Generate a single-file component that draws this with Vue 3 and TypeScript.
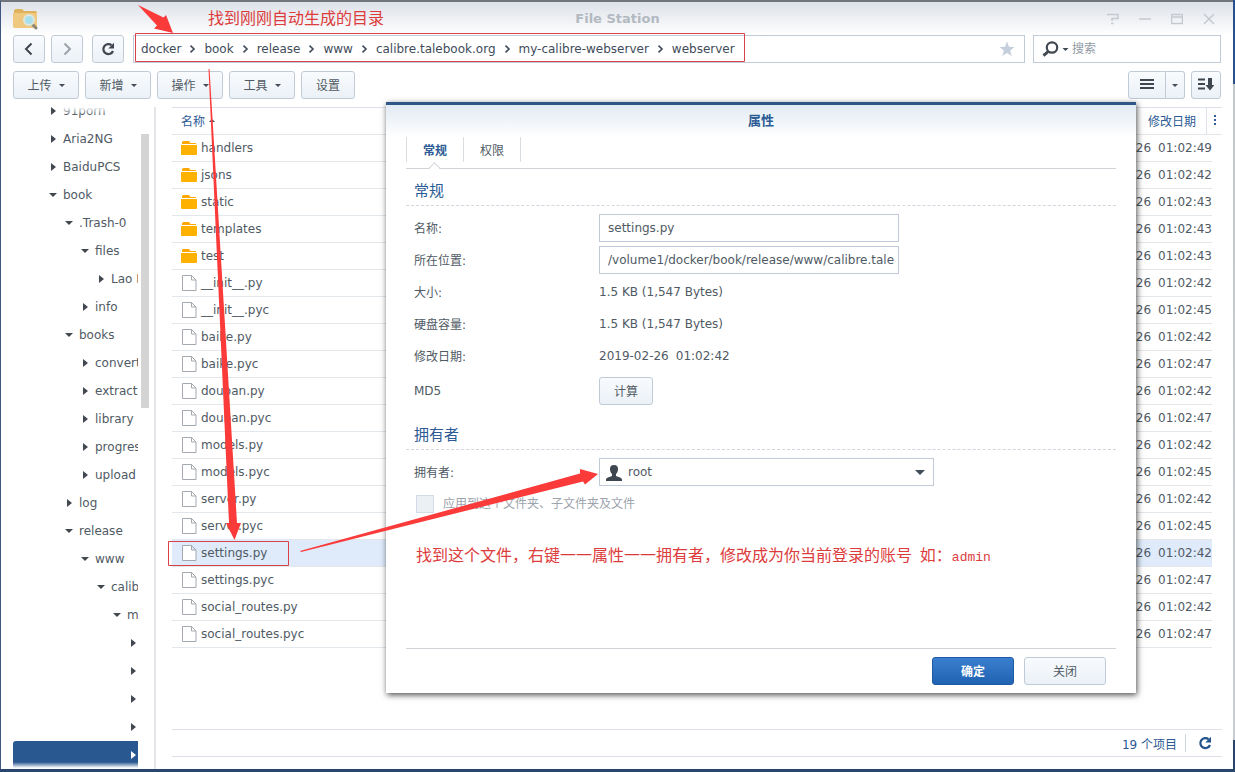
<script setup lang="ts">
import { ref } from 'vue'

interface TreeNode {
  name: string
  level: number
  open?: boolean
  selected?: boolean
}
interface FileRow {
  name: string
  time: string
  folder?: boolean
}

const path = ['docker', 'book', 'release', 'www', 'calibre.talebook.org', 'my-calibre-webserver', 'webserver']
const menus = ['上传', '新增', '操作', '工具']

const tree: TreeNode[] = [
  { name: '91porn', level: 0 },
  { name: 'Aria2NG', level: 0 },
  { name: 'BaiduPCS', level: 0 },
  { name: 'book', level: 0, open: true },
  { name: '.Trash-0', level: 1, open: true },
  { name: 'files', level: 2, open: true },
  { name: 'Lao Mao', level: 3 },
  { name: 'info', level: 2 },
  { name: 'books', level: 1, open: true },
  { name: 'convert', level: 2 },
  { name: 'extract', level: 2 },
  { name: 'library', level: 2 },
  { name: 'progress', level: 2 },
  { name: 'upload', level: 2 },
  { name: 'log', level: 1 },
  { name: 'release', level: 1, open: true },
  { name: 'www', level: 2, open: true },
  { name: 'calibre', level: 3, open: true },
  { name: 'my', level: 4, open: true },
  { name: '', level: 5 },
  { name: '', level: 5 },
  { name: '', level: 5 },
  { name: '', level: 5 },
  { name: '', level: 5, selected: true },
]

const files: FileRow[] = [
  { name: 'handlers', time: '49', folder: true },
  { name: 'jsons', time: '42', folder: true },
  { name: 'static', time: '43', folder: true },
  { name: 'templates', time: '43', folder: true },
  { name: 'test', time: '43', folder: true },
  { name: '__init__.py', time: '42' },
  { name: '__init__.pyc', time: '45' },
  { name: 'baike.py', time: '42' },
  { name: 'baike.pyc', time: '47' },
  { name: 'douban.py', time: '42' },
  { name: 'douban.pyc', time: '47' },
  { name: 'models.py', time: '42' },
  { name: 'models.pyc', time: '45' },
  { name: 'server.py', time: '42' },
  { name: 'server.pyc', time: '45' },
  { name: 'settings.py', time: '42' },
  { name: 'settings.pyc', time: '47' },
  { name: 'social_routes.py', time: '42' },
  { name: 'social_routes.pyc', time: '47' },
]

const selected = ref('settings.py')
const fileName = ref('settings.py')
const location = ref('/volume1/docker/book/release/www/calibre.talebook.org/my-calibre-webserver/webserver/settings.py')
const owner = ref('root')
</script>

<template>
  <div class="desktop">
    <main class="window">
      <header class="titlebar">
        <svg class="app-icon" width="25" height="22" viewBox="0 0 25 22" aria-hidden="true">
          <path d="M1 3a2 2 0 0 1 2-2h6l2 2h11a2 2 0 0 1 2 2v13a2 2 0 0 1-2 2H3a2 2 0 0 1-2-2z" fill="#dfb35d" />
          <path d="M0 5h24v13a2 2 0 0 1-2 2H2a2 2 0 0 1-2-2z" fill="#efc97f" />
          <path d="M19 16l4 4" stroke="#8d8674" stroke-width="3" stroke-linecap="round" />
          <circle cx="16" cy="12" r="5" fill="#a9e0ee" stroke="#dfe6dc" stroke-width="2" />
        </svg>
        <h1>File Station</h1>
        <div class="window-buttons">
          <button type="button" aria-label="帮助"><svg width="12" height="12" viewBox="0 0 12 12"><path d="M0 1.500h11v4H5v2.500M4 10.500h2.500" /></svg></button>
          <button type="button" aria-label="最小化"><svg width="12" height="12" viewBox="0 0 12 12"><path d="M0 6h12" /></svg></button>
          <button type="button" aria-label="最大化"><svg width="12" height="12" viewBox="0 0 12 12"><path d="M.5 1.500h11v9H.5zM.5 4h11" /></svg></button>
          <button type="button" aria-label="关闭窗口"><svg width="12" height="12" viewBox="0 0 12 12"><path d="M1 1l10 10M11 1L1 11" /></svg></button>
        </div>
      </header>

      <div class="navigation">
        <button class="btn nav-btn" type="button" aria-label="后退"><svg width="14" height="14" viewBox="0 0 14 14"><path d="M9.500 1.500L4 7l5.500 5.500" fill="none" stroke="#3f4650" stroke-width="2" /></svg></button>
        <button class="btn nav-btn" type="button" aria-label="前进"><svg width="14" height="14" viewBox="0 0 14 14"><path d="M4.500 1.500L10 7l-5.500 5.500" fill="none" stroke="#9aa2ab" stroke-width="2" /></svg></button>
        <button class="btn nav-btn reload" type="button" aria-label="刷新"><svg width="14" height="14" viewBox="0 0 14 14"><path d="M10.500 3.200A5 5 0 1 0 12 9" fill="none" stroke="#3f4650" stroke-width="2.200" /><path d="M13 .8v5.700H7.300z" fill="#3f4650" /></svg></button>
        <nav class="path" aria-label="路径">
          <template v-for="(part, i) in path" :key="part">
            <svg v-if="i" width="7" height="8" viewBox="0 0 7 8"><path d="M1.500 .7L5 4 1.500 7.300" fill="none" stroke="#414b5a" stroke-width="1.600" /></svg>
            <a href="#">{{ part }}</a>
          </template>
          <button class="star" type="button" aria-label="收藏"><svg width="16" height="16" viewBox="0 0 16 16"><path d="M8 .5l2 5.200 5.500.3-4.300 3.500 1.500 5.500L8 12l-4.700 3 1.500-5.500L.5 6l5.500-.3z" fill="#c5cfdb" /></svg></button>
        </nav>
        <div class="search">
          <svg width="28" height="16" viewBox="0 0 28 16"><circle cx="10" cy="6.500" r="5.200" fill="none" stroke="#414850" stroke-width="2.200" /><path d="M6.200 10.500L1.500 14.700" stroke="#414850" stroke-width="3" /><path d="M20.500 7h6l-3 3z" fill="#414850" /></svg>
          <input type="text" aria-label="搜索" placeholder="搜索">
        </div>
      </div>

      <div class="toolbar">
        <button v-for="m in menus" :key="m" class="btn menu-btn" type="button">{{ m }}<span class="caret"></span></button>
        <button class="btn settings-btn" type="button">设置</button>
        <div class="view-group">
          <button class="btn view-btn" type="button" aria-label="列表视图"><svg width="14" height="10" viewBox="0 0 14 10"><path d="M0 1h14M0 5h14M0 9h14" stroke="#3f4650" stroke-width="2" /></svg></button>
          <button class="btn view-more" type="button" aria-label="更多视图"><span class="caret"></span></button>
        </div>
        <button class="btn sort-btn" type="button" aria-label="排序"><svg width="16" height="13" viewBox="0 0 16 13"><path d="M0 1.500h7M0 6h7M0 10.500h7" stroke="#3f4650" stroke-width="2" /><path d="M10 0h4v7h2.500L12 12.500 7.500 7H10z" fill="#3f4650" /></svg></button>
      </div>

      <div class="content">
        <aside class="sidebar">
          <div class="tree-view">
            <ul class="tree">
              <li v-for="(n, i) in tree" :key="i" :class="['level-' + n.level, { selected: n.selected }]">
                <span class="toggle" :class="{ open: n.open }"></span><span>{{ n.name }}</span>
              </li>
            </ul>
          </div>
          <div class="scroll-track"><div class="scroll-thumb"></div></div>
        </aside>

        <section class="listing">
          <table>
            <colgroup><col><col class="col-date"><col class="col-inset"><col class="col-end"></colgroup>
            <thead>
              <tr>
                <th scope="col"><span class="sort-label">名称<span class="sort-up"></span></span></th>
                <th scope="col" class="date-head">修改日期</th>
                <th scope="col" colspan="2" class="more-head"><button type="button" aria-label="选择列"><i></i><i></i><i></i></button></th>
              </tr>
            </thead>
            <tbody>
              <tr v-for="f in files" :key="f.name" :class="{ active: f.name === selected }" @click="selected = f.name">
                <td>
                  <div class="file">
                    <svg v-if="f.folder" width="16" height="14" viewBox="0 0 16 14"><path d="M1 3V1.200L2 0h6l1.500 2H15v1z" fill="#ffa800" /><path d="M0 4h16v9a1 1 0 0 1-1 1H1a1 1 0 0 1-1-1z" fill="#ffb100" /></svg>
                    <svg v-else width="16" height="16" viewBox="0 0 16 16"><path d="M1.500.5h9l4.500 4.500v10.500H1.500zM10.500.5V5H15" fill="#fff" stroke="#a4a9b0" /></svg>
                    {{ f.name }}
                  </div>
                </td>
                <td colspan="2"><div class="date"><span>2019-02-26</span><span>01:02:{{ f.time }}</span></div></td>
                <td class="end"></td>
              </tr>
            </tbody>
          </table>
          <footer class="status">
            <span>19 个项目</span>
            <button type="button" aria-label="重新加载"><svg width="14" height="14" viewBox="0 0 14 14"><path d="M10.500 3.200A5 5 0 1 0 12 9" fill="none" stroke="#24528c" stroke-width="2.200" /><path d="M13 .8v5.700H7.300z" fill="#24528c" /></svg></button>
          </footer>
        </section>
      </div>
    </main>

    <section class="dialog" role="dialog" aria-labelledby="dialog-title">
      <h2 id="dialog-title">属性</h2>
      <div class="tabs" role="tablist">
        <button type="button" role="tab" aria-selected="true" class="current">常规</button>
        <button type="button" role="tab" aria-selected="false">权限</button>
      </div>
      <h3>常规</h3>
      <div class="fields">
        <label for="name">名称:</label><input id="name" v-model="fileName" type="text">
        <label for="location">所在位置:</label><input id="location" v-model="location" type="text" readonly>
        <span class="label">大小:</span><span>1.5 KB (1,547 Bytes)</span>
        <span class="label">硬盘容量:</span><span>1.5 KB (1,547 Bytes)</span>
        <span class="label">修改日期:</span><span class="modified"><span>2019-02-26</span><span>01:02:42</span></span>
        <span>MD5</span><span class="md5"><button class="btn" type="button">计算</button></span>
      </div>
      <h3 class="owner-title">拥有者</h3>
      <div class="fields">
        <label for="owner">拥有者:</label>
        <div class="owner">
          <svg class="person" width="16" height="16" viewBox="0 0 16 16"><path d="M8 0c3 0 4.300 1.800 4 4.500-.2 2.300-1 3.500-2 4.500v2c2 1 5.500 1.200 6 3.500V16H0v-1.500C.5 12.200 4 12 6 11V9C5 8 4.200 6.800 4 4.500 3.700 1.800 5 0 8 0z" fill="#3e4650" /></svg>
          <select id="owner" v-model="owner"><option>root</option><option>admin</option></select>
          <span class="select-arrow"></span>
        </div>
      </div>
      <div class="apply"><input id="apply" type="checkbox" disabled><label for="apply">应用到这个文件夹、子文件夹及文件</label></div>
      <p class="note">找到这个文件，右键一一属性一一拥有者，修改成为你当前登录的账号<span class="latin">&nbsp;</span>如：<span class="latin">admin</span></p>
      <div class="actions">
        <button class="btn primary" type="button">确定</button>
        <button class="btn" type="button">关闭</button>
      </div>
    </section>

    <p class="note note-top">找到刚刚自动生成的目录</p>
    <svg class="marks" width="760" height="580" viewBox="0 0 760 580" aria-hidden="true">
      <g fill="none" stroke="#d8404a">
        <path d="M135.500 33.500h609v28h-609z" />
        <path d="M168.500 541.500h120v24h-120z" />
      </g>
      <g fill="#fb3a3a">
        <path d="M138 5L163.500 17.500 166 15 173 33 154 28.500 157 25.500z" />
        <path d="M208.500 69h1L237 523h4l-6.500 17L226 523h3z" />
        <path d="M300 551L580 473.500V469L598 474 585 484.500 583 481.500 301 552z" />
      </g>
    </svg>
  </div>
</template>

<style>
body {
  margin: 0;
}
</style>

<style scoped>
.desktop {
  position: relative;
  box-sizing: border-box;
  min-height: 100vh;
  padding: 0 2px 3px 0;
  display: flex;
  background: linear-gradient(#28508a 0, #28508a 84px, #c4c7cb 84px, #c8ccd2 740px, #29466f 740px);
  font-family: "DejaVu Sans", "Noto Sans CJK SC", sans-serif;
  font-size: 12px;
  color: #505a64;
  overflow: hidden;
}
button, input, select {
  font: inherit;
  color: inherit;
  box-sizing: border-box;
  margin: 0;
}
button {
  padding: 0;
  border: 0;
  background: none;
}
h1, h2, h3, p, ul {
  margin: 0;
  padding: 0;
}
svg {
  display: block;
  flex: none;
}
.window {
  flex: 1;
  min-width: 0;
  display: flex;
  flex-direction: column;
  border-top: 2px solid #70757d;
  border-left: 1px solid #3f5680;
  background: #fff;
}
.titlebar {
  display: flex;
  align-items: center;
  justify-content: space-between;
  height: 33px;
  padding: 0 18px 0 12px;
  background: linear-gradient(#dde1e8, #fff);
}
.titlebar h1 {
  font-size: 13px;
  color: #b2b9c1;
  padding-left: 90px;
}
.window-buttons {
  display: flex;
  gap: 20px;
}
.window-buttons path {
  fill: none;
  stroke: #c6cacf;
  stroke-width: 1.500;
}
.navigation {
  display: flex;
  height: 28px;
  padding: 0 12px;
}
.btn {
  display: flex;
  align-items: center;
  justify-content: center;
  height: 28px;
  padding-bottom: 2px;
  border: 1px solid #c1cbd7;
  border-radius: 3px;
  background: linear-gradient(#f9fbfd, #ebf1f7);
}
.nav-btn {
  width: 32px;
  margin-right: 6px;
  padding: 0;
}
.reload {
  margin: 0 9px 0 3px;
}
.path {
  flex: 1;
  display: flex;
  align-items: center;
  gap: 8px;
  padding: 0 9px 0 7px;
  border: 1px solid #c1cbd7;
}
.path a {
  color: #414b5a;
  text-decoration: none;
}
.star {
  margin-left: auto;
}
.search {
  display: flex;
  align-items: center;
  gap: 2px;
  box-sizing: border-box;
  width: 188px;
  margin-left: 8px;
  padding: 0 8px;
  border: 1px solid #c1cbd7;
}
.search input {
  flex: 1;
  min-width: 0;
  padding: 0;
  border: 0;
  outline: 0;
}
.search input::placeholder {
  color: #929ba5;
}
.toolbar {
  display: flex;
  gap: 6px;
  padding: 8px 12px;
}
.menu-btn {
  gap: 7px;
  width: 66px;
}
.caret {
  margin-top: 2px;
  border: 3px solid transparent;
  border-top-color: #414b5a;
  border-bottom: 0;
}
.settings-btn {
  width: 54px;
}
.view-group {
  display: flex;
  margin-left: auto;
}
.view-btn {
  width: 38px;
  border-radius: 3px 0 0 3px;
}
.view-more {
  width: 19px;
  border-left: 0;
  border-radius: 0 3px 3px 0;
}
.sort-btn {
  width: 30px;
}
.content {
  flex: 1;
  display: flex;
  min-height: 0;
}
.sidebar {
  display: flex;
  flex: none;
  box-sizing: border-box;
  width: 155px;
  padding: 0 5px 0 12px;
  border-right: 2px solid #e3e5e8;
}
.tree-view {
  position: relative;
  width: 125px;
  height: 661px;
  overflow: hidden;
}
.tree-view::before {
  content: "";
  position: absolute;
  inset: 0 0 auto;
  height: 8px;
  background: linear-gradient(#fff, #fff0);
}
.tree-view::after {
  content: "";
  position: absolute;
  inset: auto 0 0;
  height: 6px;
  background: linear-gradient(#fff0, #fff);
}
.tree {
  margin-top: -10px;
  list-style: none;
}
.tree li {
  display: flex;
  align-items: center;
  gap: 5px;
  height: 28px;
  white-space: nowrap;
}
.level-0 { padding-left: 35px; }
.level-1 { padding-left: 51px; }
.level-2 { padding-left: 67px; }
.level-3 { padding-left: 83px; }
.level-4 { padding-left: 99px; }
.level-5 { padding-left: 115px; }
.tree .selected {
  background: #29578f;
  border-radius: 3px 0 0 3px;
}
.toggle {
  flex: none;
  width: 10px;
  height: 8px;
  background: #414850;
  clip-path: polygon(30% 0, 80% 50%, 30% 100%);
}
.toggle.open {
  clip-path: polygon(10% 25%, 90% 25%, 50% 75%);
}
.selected .toggle {
  background: #fff;
}
.scroll-track {
  padding: 27px 0 0 3px;
}
.scroll-thumb {
  width: 8px;
  height: 274px;
  background: #d4d4d4;
}
.listing {
  flex: 1;
  min-width: 0;
  display: flex;
  flex-direction: column;
  justify-content: space-between;
  padding: 0 11px 12px 16px;
}
table {
  width: 100%;
  table-layout: fixed;
  border-collapse: separate;
  border-spacing: 0;
}
.col-date { width: 160px; }
.col-inset { width: 6px; }
.col-end { width: 10px; }
th, td {
  box-sizing: border-box;
  height: 27px;
  padding: 0;
  border-bottom: 1px solid #e2e7ec;
}
th {
  height: 28px;
  padding-bottom: 2px;
  border-top: 1px solid #dce2e8;
  color: #2c5a94;
  font-weight: 400;
  text-align: left;
}
.sort-label {
  display: flex;
  align-items: center;
  gap: 4px;
  padding-left: 9px;
}
.sort-up {
  border: 3px solid transparent;
  border-bottom-color: #414b5a;
  border-top: 0;
}
th.date-head {
  padding-right: 10px;
  text-align: right;
}
.more-head {
  border-left: 1px solid #dce2e8;
}
.more-head button {
  display: grid;
  gap: 2px;
  margin: 0 auto;
}
.more-head i {
  width: 2px;
  height: 2px;
  background: #2c5a94;
}
.file {
  display: flex;
  align-items: center;
  gap: 4px;
  height: 26px;
  padding-left: 9px;
}
.date {
  display: flex;
  justify-content: flex-end;
  gap: 7px;
}
.end {
  border: 0;
}
.active td:not(.end) {
  background: #dfebfb;
}
.status {
  display: flex;
  align-items: center;
  justify-content: flex-end;
  height: 26px;
  border: 1px solid #dce2e8;
  border-width: 1px 0;
  color: #2c5a94;
}
.status button {
  margin-left: 8px;
  padding: 2px 10px 2px 12px;
  border-left: 1px solid #cdd6e0;
}
.dialog {
  position: absolute;
  top: 102px;
  left: 386px;
  box-sizing: border-box;
  width: 750px;
  padding: 0 20px;
  border-top: 3px solid #2f5688;
  background: linear-gradient(#e1eaf3, #fff 32px);
  box-shadow: 1px 2px 6px #000000b0;
}
.dialog h2 {
  height: 32px;
  line-height: 32px;
  font-size: 13px;
  text-align: center;
  color: #2c5a94;
}
.tabs {
  display: flex;
  height: 31px;
  border-bottom: 1px solid #d0d4d8;
}
.tabs button {
  position: relative;
  width: 57px;
  height: 25px;
  border-left: 1px solid #d8dde2;
}
.tabs button:last-child {
  width: 58px;
  border-right: 1px solid #d8dde2;
}
.tabs .current {
  font-weight: 700;
  color: #2c5a94;
}
.tabs .current::after {
  content: "";
  position: absolute;
  left: 23px;
  top: 27px;
  width: 8px;
  height: 8px;
  border: 1px solid #d0d4d8;
  border-width: 1px 0 0 1px;
  background: linear-gradient(135deg, #fff 50%, #fff0 50%);
  transform: rotate(45deg);
}
.dialog h3 {
  height: 36px;
  padding-left: 8px;
  border-bottom: 1px dashed #d0d7de;
  font-size: 15px;
  font-weight: 400;
  line-height: 44px;
  color: #2c5a94;
}
.fields {
  display: grid;
  grid-template-columns: 185px 1fr;
  grid-auto-rows: minmax(28px, auto);
  align-items: center;
  row-gap: 4px;
  padding: 8px 0 0 8px;
}
.fields label, .fields .label {
  padding-bottom: 2px;
}
.fields input {
  width: 300px;
  height: 28px;
  padding: 0 4px 0 8px;
  border: 1px solid #c1cbd7;
  background: #fff;
}
.modified {
  display: flex;
  gap: 7px;
}
.md5 {
  padding: 3px 0;
}
.md5 .btn {
  width: 54px;
}
.dialog .owner-title {
  margin-top: 5px;
}
.owner {
  position: relative;
  width: 335px;
}
.owner select {
  display: block;
  appearance: none;
  width: 100%;
  height: 28px;
  padding: 0 24px 0 28px;
  border: 1px solid #c1cbd7;
  border-radius: 0;
  background: #fff;
}
.person {
  position: absolute;
  left: 7px;
  top: 7px;
}
.select-arrow {
  position: absolute;
  right: 9px;
  top: 12px;
  border: 5px solid transparent;
  border-top-color: #414b5a;
  border-bottom: 0;
  pointer-events: none;
}
.apply {
  display: flex;
  align-items: center;
  gap: 9px;
  padding: 8px 0 0 10px;
  color: #9ca4ad;
}
.apply label {
  padding-bottom: 2px;
}
.apply input {
  appearance: none;
  width: 18px;
  height: 18px;
  border: 1px solid #d3dce6;
  background: #ebf0f5;
}
.note {
  font-family: "Noto Sans CJK SC", sans-serif;
  font-size: 16px;
  font-weight: 400;
  line-height: 24px;
  color: #dc3c3c;
  white-space: nowrap;
}
.dialog .note {
  padding: 29px 0 0 10px;
}
.latin {
  font-family: "Liberation Mono", monospace;
  font-size: 13px;
}
.actions {
  display: flex;
  justify-content: flex-end;
  gap: 10px;
  margin-top: 78px;
  padding: 8px 10px;
  border-top: 1px solid #d0d4d8;
}
.actions .btn {
  width: 82px;
}
.actions .primary {
  border-color: #1f5aa5;
  background: linear-gradient(#3a7fcf, #2162b2);
  color: #fff;
  font-weight: 700;
}
.note-top {
  position: absolute;
  left: 208px;
  top: 5px;
}
.marks {
  position: absolute;
  left: 0;
  top: 0;
  pointer-events: none;
}
</style>
